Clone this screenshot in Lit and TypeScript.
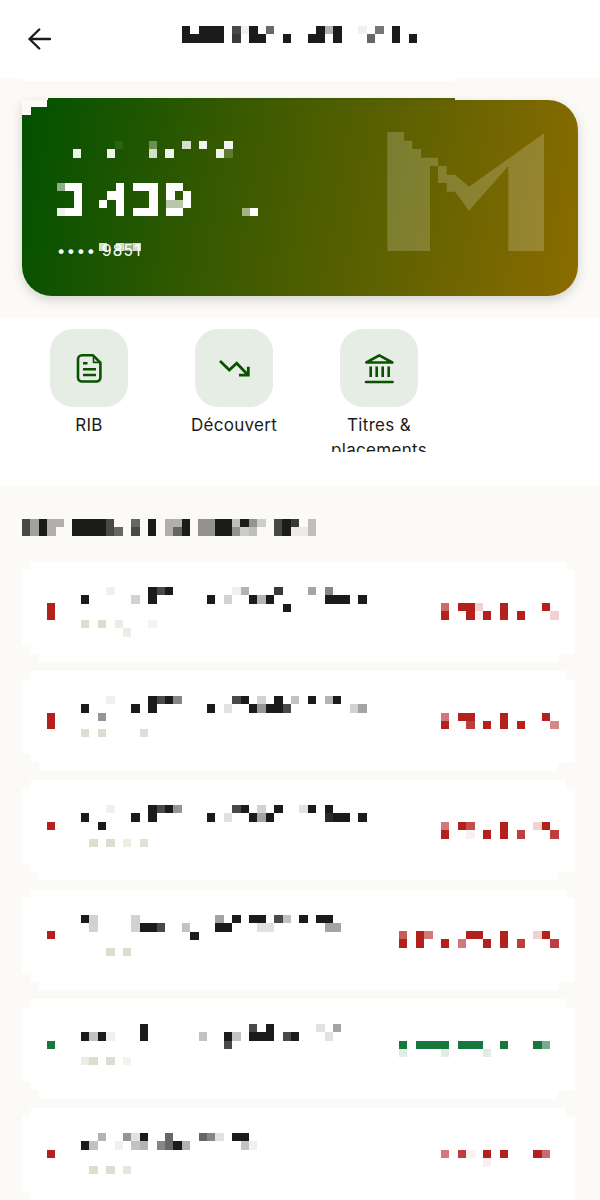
import { LitElement, html, svg, css } from 'lit';
import { customElement, property } from 'lit/decorators.js';

const INK = '#1b1c1a';
const RED = '#b3201e';
const GREEN = '#18763f';
const MUTED = '#dcdecf';

const CELL_W = 8.4;
const CELL_H = 8.34;

// Blurred-out text: each row is a string of hex opacities, "." is an empty cell
@customElement('pixel-mask')
export class PixelMask extends LitElement {
  @property({ type: Array }) rows: string[] = [];
  @property() color = INK;

  static styles = css`
    :host {
      display: block;
      line-height: 0;
    }
  `;

  render() {
    const cols = Math.max(0, ...this.rows.map((r) => r.length));
    const w = cols * CELL_W;
    const h = this.rows.length * CELL_H;
    return html`<svg width=${w} height=${h} viewBox="0 0 ${w} ${h}" shape-rendering="crispEdges">
      ${this.rows.map((row, y) =>
        [...row].map((c, x) =>
          c === '.'
            ? null
            : svg`<rect x=${x * CELL_W} y=${y * CELL_H} width=${CELL_W} height=${CELL_H} fill=${this.color} fill-opacity=${parseInt(c, 16) / 15}></rect>`
        )
      )}
    </svg>`;
  }
}

interface Txn {
  sign: string[];
  title: string[];
  sub: string[];
  amount: string[];
  credit?: boolean;
}

const TXNS: Txn[] = [
  {
    sign: ['f', 'f'],
    title: [
      '...1....fcf.......15...d...6.8',
      'f.....3.f......f.3..f5f......fff.f',
      '........................f',
    ],
    sub: ['f.f.8...5', '.....8'],
    amount: ['a.ff3..f....f', 'f..f1f.f.f...3'],
  },
  {
    sign: ['f', 'f'],
    title: [
      '...1....fcf8......cf.3.f.4.f.5f',
      'f.....f.f......f.2..f7ffc.......36',
      '..7',
    ],
    sub: ['f.f....f'],
    amount: ['9.ff...f....f.', 'f..d.f.f.f...8'],
  },
  {
    sign: ['f'],
    title: [
      '...1....fcf7......cf.3.f..2f.f',
      'f.....f.f......f.2..f6f......eff.f',
      '..f',
    ],
    sub: ['.f.f.8.d'],
    amount: ['9.fc...f...3f.', 'f..1.f.f.d...d'],
  },
  {
    sign: ['f'],
    title: [
      'f3....3.........6.f.ff.c4.f.ff',
      '.3....3ffc..4...ff...22......66',
      '.............f',
    ],
    sub: ['...f.f'],
    amount: ['b.f9....ff..f...3f.', 'f.f..f.9..f.f.d...d'],
  },
  {
    sign: ['f'],
    credit: true,
    title: [
      '.......f............c.f.....2.6',
      'f4f1...f......4..f4.fff.cf...2',
      '.................c',
    ],
    sub: ['8f.f.5'],
    amount: ['f.ffff.fff..f...f9.', '2....2....2'],
  },
  {
    sign: ['f'],
    title: [
      '..5..72f..a...a82.ff',
      'f4..1.45.8af5......41',
      '.',
    ],
    sub: ['.f.f.b'],
    amount: ['9.d1.f.f...fa.', '.....1'],
  },
];

@customElement('app-root')
export class AppRoot extends LitElement {
  static styles = css`
    :host {
      display: block;
      width: 600px;
      background: #fbfaf6;
      font-family: 'Inter', 'Liberation Sans', sans-serif;
      color: #1b1c1a;
    }

    .top {
      position: relative;
      display: flex;
      align-items: flex-start;
      height: 78px;
      box-sizing: border-box;
      padding: 26px 0 0 27px;
      background: #fff;
    }
    .top::after {
      content: '';
      position: absolute;
      left: 22px;
      top: 78px;
      width: 433px;
      height: 3px;
      background: #fff;
    }
    .back {
      width: 24px;
      height: 26px;
      margin-right: 131px;
      flex: none;
    }

    .hero-wrap {
      padding: 22px 22px 22.5px;
    }
    .hero {
      position: relative;
      height: 195.5px;
      box-sizing: border-box;
      padding: 41px 0 0 34.7px;
      border-radius: 0 30px 30px 30px;
      background: linear-gradient(100deg, #005100 0%, #3d5a00 40%, #6a6400 75%, #8b6c00 100%);
      box-shadow: 0 4px 12px rgba(0, 0, 0, 0.16);
      color: #fff;
    }
    .hero::before {
      content: '';
      position: absolute;
      left: 26px;
      top: -2px;
      width: 407px;
      height: 2px;
      background: linear-gradient(90deg, #0a5200, #5a6000);
    }
    .notch {
      position: absolute;
      left: 0;
      top: 0;
      background: #fbfaf6;
    }
    .notch.wide {
      width: 25.3px;
      height: 6.7px;
    }
    .notch.narrow {
      width: 8.7px;
      height: 15px;
    }
    .hero-label {
      margin-left: 16.6px;
    }
    .hero-amount {
      margin-top: 25.6px;
    }
    .hero-number {
      position: relative;
      margin-top: 25.5px;
      font-size: 15.5px;
      line-height: 18px;
      letter-spacing: 1.2px;
      white-space: nowrap;
    }
    .hero-number pixel-mask {
      position: absolute;
      left: 42px;
      top: 0.5px;
    }
    .logo {
      position: absolute;
      left: 365px;
      top: 31px;
    }

    .actions {
      display: flex;
      height: 168px;
      box-sizing: border-box;
      padding: 11px 0 0 16.5px;
      background: #fff;
    }
    .action {
      width: 145px;
      display: flex;
      flex-direction: column;
      align-items: center;
    }
    .action-icon {
      width: 78px;
      height: 78px;
      border-radius: 23px;
      background: #e6ede5;
      flex: none;
    }
    .action-icon svg {
      display: block;
      fill: none;
      stroke: #0a5200;
      stroke-width: 2.6;
    }
    .action-label {
      margin-top: 6px;
      width: 120px;
      height: 39px;
      overflow: hidden;
      text-align: center;
      font-size: 17px;
      line-height: 25px;
      letter-spacing: 0.3px;
    }

    .feed {
      padding: 33.3px 25px 0 22px;
    }
    .list {
      display: flex;
      flex-direction: column;
      gap: 9.3px;
      margin-top: 25.7px;
    }
    .txn {
      display: flex;
      align-items: flex-start;
      height: 100px;
      box-sizing: border-box;
      padding: 25px 16px 0 25.4px;
      background: #fff;
      clip-path: polygon(
        8.4px 0,
        544px 0,
        544px 8.4px,
        553px 8.4px,
        553px 92px,
        536px 92px,
        536px 100px,
        17px 100px,
        17px 92px,
        8.4px 92px,
        8.4px 83px,
        0 83px,
        0 8.4px,
        8.4px 8.4px
      );
    }
    .sign {
      width: 33.6px;
      margin-top: 16.7px;
      flex: none;
    }
    .txn-body {
      flex: 1;
    }
    .txn-sub {
      margin-top: 8.3px;
    }
    .txn-amount {
      margin-top: 16.7px;
      flex: none;
    }
  `;

  renderIcon(name: string) {
    if (name === 'doc') {
      return html`<svg width="78" height="78" viewBox="0 0 78 78" stroke-linecap="round" stroke-linejoin="round">
        <path d="M32 26.3H43L50.4 33.7V48.5a4 4 0 0 1-4 4H32a4 4 0 0 1-4-4V30.3a4 4 0 0 1 4-4Z" />
        <path d="M43.5 27V33.4H50" stroke-width="1.6" />
        <path d="M33 34.3H37.5M33 40.3H46M33 46H46" stroke-linecap="butt" />
      </svg>`;
    }
    if (name === 'down') {
      return html`<svg width="78" height="78" viewBox="0 0 78 78">
        <path d="M25 32L34.3 41L41.7 34.3L52.5 45.5" stroke-width="2.8" />
        <path d="M44 46.2H53.3V37.7" stroke-width="2.8" />
      </svg>`;
    }
    return html`<svg width="78" height="78" viewBox="0 0 78 78" stroke-linejoin="round" stroke-linecap="round">
      <path d="M26.3 33.5L39.3 26.3L52.3 33.5Z" />
      <path d="M30.7 37.5V48M36.7 37.5V48M42.7 37.5V48M48.7 37.5V48" stroke-linecap="butt" />
      <path d="M26 53H52.6" />
    </svg>`;
  }

  render() {
    return html`
      <header class="top">
        <svg class="back" viewBox="0 0 24 26" fill="none" stroke=${INK} stroke-width="2.4" stroke-linecap="round" stroke-linejoin="round">
          <path d="M23 13H2.5M12.2 3.5L2.5 13L12.2 22.5" />
        </svg>
        <pixel-mask .rows=${['f.fff.c1f.a.....f5f..1.9.f', 'fffff.d.ff..f..ff.f...a..f.f']}></pixel-mask>
      </header>

      <div class="hero-wrap">
        <section class="hero">
          <span class="notch wide"></span>
          <span class="notch narrow"></span>
          <svg class="logo" width="158" height="120" viewBox="387 131 158 120" fill="#fff" fill-opacity="0.19">
            <path d="M387.3 132H404V140.7H412.3V149H421V157.7H438V166H446.7V174.7H455L469 186.7L544 133.3V251H508.3V166L469 210.7L455 191.7H446.7V183H438V166H430V251H387.3Z" />
          </svg>
          <pixel-mask
            class="hero-label"
            color="#fff"
            .rows=${['.....1...5...c.e..e', 'e...e....c.e.....e3']}
          ></pixel-mask>
          <pixel-mask
            class="hero-amount"
            color="#fff"
            .rows=${[
              '8ff....f.fff.ff',
              '..f...ff...f.f.f',
              '..f..f.f...f.aaf',
              'eff....f.fff.ff.......8f',
            ]}
          ></pixel-mask>
          <div class="hero-number">
            •••• 9851
            <pixel-mask color="#fff" .rows=${['c.c8c']}></pixel-mask>
          </div>
        </section>
      </div>

      <section class="actions">
        <div class="action">
          <div class="action-icon">${this.renderIcon('doc')}</div>
          <div class="action-label">RIB</div>
        </div>
        <div class="action">
          <div class="action-icon">${this.renderIcon('down')}</div>
          <div class="action-label">Découvert</div>
        </div>
        <div class="action">
          <div class="action-icon">${this.renderIcon('bank')}</div>
          <div class="action-label">Titres &amp; placements</div>
        </div>
      </section>

      <section class="feed">
        <pixel-mask
          .rows=${[
            'c6f55.ffffc..a.f.55f.77ff4f73.cfd.4',
            'c6f5..ffffca.c.f.5af.77ff734..cf114',
          ]}
        ></pixel-mask>
        <div class="list">
          ${TXNS.map((t) => {
            const tone = t.credit ? GREEN : RED;
            return html`<article class="txn">
              <pixel-mask class="sign" color=${tone} .rows=${t.sign}></pixel-mask>
              <div class="txn-body">
                <pixel-mask .rows=${t.title}></pixel-mask>
                <pixel-mask class="txn-sub" color=${MUTED} .rows=${t.sub}></pixel-mask>
              </div>
              <pixel-mask class="txn-amount" color=${tone} .rows=${t.amount}></pixel-mask>
            </article>`;
          })}
        </div>
      </section>
    `;
  }
}
